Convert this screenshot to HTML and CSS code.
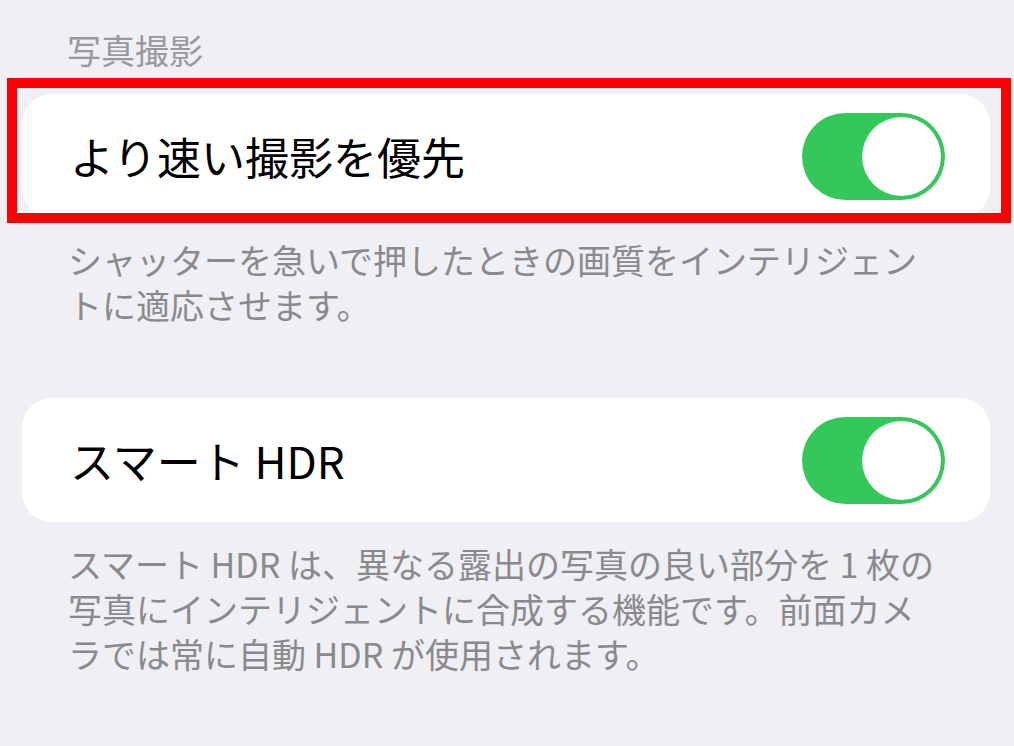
FILE: index.html
```html
<!DOCTYPE html>
<html lang="ja">
<head>
<meta charset="utf-8">
<title>写真撮影</title>
<link rel="stylesheet" href="styles.css">
</head>
<body>
<main class="page">
  <div class="section-header">写真撮影</div>
  <div class="highlight-wrap">
    <div class="card">
      <span class="card-label">より速い撮影を優先</span>
      <span class="toggle"><span class="knob"></span></span>
    </div>
    <div class="highlight"></div>
  </div>
  <p class="footer">シャッターを急いで押したときの画質をインテリジェン<br>トに適応させます。</p>

  <div class="card card-second">
    <span class="card-label">スマート HDR</span>
    <span class="toggle"><span class="knob"></span></span>
  </div>
  <p class="footer">スマート HDR は、異なる露出の写真の良い部分を 1 枚の<br>写真にインテリジェントに合成する機能です。前面カメ<br>ラでは常に自動 HDR が使用されます。</p>
</main>
</body>
</html>
```

FILE: styles.css
```css
html, body {
  margin: 0;
  padding: 0;
  background: #efeff4;
}

body {
  font-family: "Noto Sans CJK JP", "Noto Sans", sans-serif;
  width: 1014px;
  height: 746px;
  overflow: hidden;
}

.page {
  display: flex;
  flex-direction: column;
  padding: 30px 24px 0 22px;
}

.section-header {
  font-size: 34px;
  line-height: 40px;
  color: #98989d;
  padding-left: 45px;
  margin-bottom: 24px;
}

.highlight-wrap {
  position: relative;
}

.card {
  height: 124px;
  box-sizing: border-box;
  background: #ffffff;
  border-radius: 30px;
  display: flex;
  align-items: center;
  justify-content: space-between;
  padding: 0 45px 0 48px;
}

.card-second {
  margin-top: 71px;
}

.card-label {
  font-size: 44px;
  line-height: 50px;
  color: #000000;
}

.toggle {
  width: 143px;
  height: 87px;
  box-sizing: border-box;
  border-radius: 44px;
  background: #34c759;
  display: flex;
  align-items: center;
  justify-content: flex-end;
  padding: 4px;
}

.knob {
  width: 79px;
  height: 79px;
  border-radius: 50%;
  background: #ffffff;
}

.highlight {
  position: absolute;
  left: -15px;
  top: -16px;
  right: -21px;
  bottom: -5px;
  border: 10px solid #ff0000;
}

.footer {
  margin: 19px 0 0 0;
  padding: 0 0 0 46px;
  font-size: 34px;
  line-height: 45px;
  color: #8a8a8e;
  white-space: nowrap;
}
```
